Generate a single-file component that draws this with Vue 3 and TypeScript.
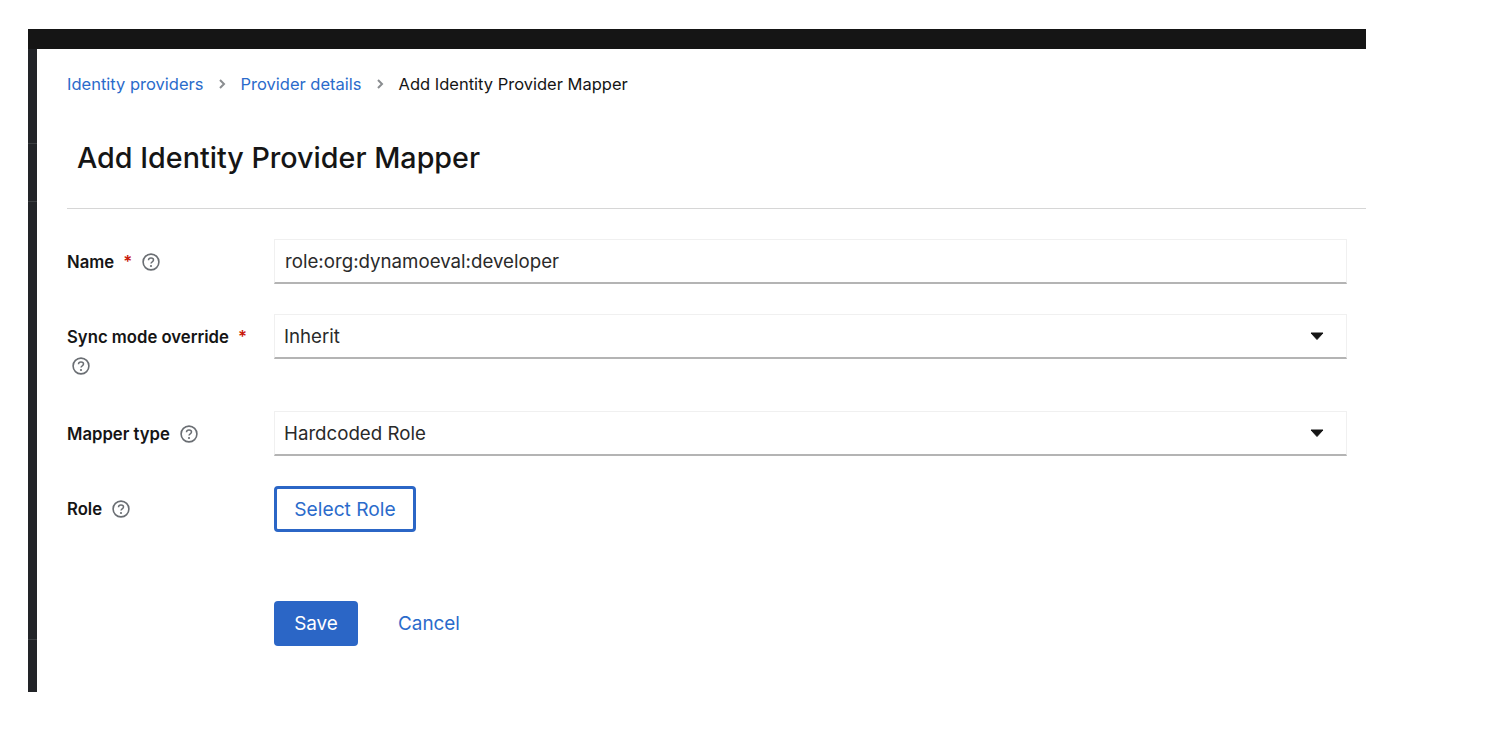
<script setup lang="ts">
interface Row { label: string; required: boolean; kind: 'input' | 'select' | 'button'; value: string; wrap?: boolean }
const rows: Row[] = [
  { label: 'Name', required: true, kind: 'input', value: 'role:org:dynamoeval:developer' },
  { label: 'Sync mode override', required: true, kind: 'select', value: 'Inherit', wrap: true },
  { label: 'Mapper type', required: false, kind: 'select', value: 'Hardcoded Role' },
  { label: 'Role', required: false, kind: 'button', value: 'Select Role' },
]
</script>

<template>
  <div class="page">
    <div class="frame">
      <header class="topbar"></header>
      <div class="body">
        <aside class="rail">
          <div class="seg s1"></div>
          <div class="seg s2"></div>
          <div class="seg s3"></div>
          <div class="seg s4"></div>
        </aside>
        <main class="main">
          <nav class="crumbs">
            <a class="link">Identity providers</a>
            <svg class="chev" viewBox="0 0 10 12"><path d="M3 2l4 4-4 4" fill="none" stroke="#8a8d90" stroke-width="2" /></svg>
            <a class="link">Provider details</a>
            <svg class="chev" viewBox="0 0 10 12"><path d="M3 2l4 4-4 4" fill="none" stroke="#8a8d90" stroke-width="2" /></svg>
            <span class="current">Add Identity Provider Mapper</span>
          </nav>
          <h1 class="title">Add Identity Provider Mapper</h1>
          <div class="rule"></div>
          <form class="form">
            <div v-for="r in rows" :key="r.label" class="row" :class="{ tall: r.wrap, btnrow: r.kind === 'button' }">
              <div class="label" :class="{ wrap: r.wrap }">
                <span class="name">{{ r.label }}</span>
                <span v-if="r.required" class="req">*</span>
                <svg class="help" viewBox="0 0 18 18">
                  <circle cx="9" cy="9" r="7.9" fill="none" stroke="#6a6e73" stroke-width="1.6" />
                  <path d="M6.5 7.2c0-1.4 1.1-2.2 2.5-2.2s2.5.8 2.5 2.1c0 1.8-2.5 1.7-2.5 3.5" fill="none" stroke="#6a6e73" stroke-width="1.5" />
                  <circle cx="9" cy="13" r="1.1" fill="#6a6e73" />
                </svg>
              </div>
              <div v-if="r.kind === 'input'" class="field">{{ r.value }}</div>
              <div v-else-if="r.kind === 'select'" class="field select">
                <span>{{ r.value }}</span>
                <svg class="caret" viewBox="0 0 14 8"><path d="M1 1h12L7 7.5z" fill="#151515" stroke="#151515" stroke-linejoin="round" /></svg>
              </div>
              <button v-else type="button" class="btn-outline">{{ r.value }}</button>
            </div>
            <div class="actions">
              <button type="button" class="btn-save">Save</button>
              <button type="button" class="btn-link">Cancel</button>
            </div>
          </form>
        </main>
      </div>
    </div>
  </div>
</template>

<style>
html, body { margin: 0; background: #fff; }
</style>

<style scoped>
.page {
  width: 1496px;
  height: 734px;
  padding: 29px 130px 42px 28px;
  box-sizing: border-box;
  font-family: Inter, "Noto Sans", sans-serif;
  color: #151515;
  overflow: hidden;
}
.frame { height: 100%; display: flex; flex-direction: column; }
.topbar { height: 19.5px; flex: none; background: #151515; }
.body { flex: 1; display: flex; min-height: 0; }
.rail { width: 8.5px; flex: none; background: #222428; display: flex; flex-direction: column; }
.seg { border-bottom: 1px solid #3c3f42; }
.s1 { height: 94px; }
.s2 { height: 57px; }
.s3 { height: 437px; }
.s4 { flex: 1; border-bottom: none; }
.main { flex: 1; min-width: 0; padding-left: 30.5px; background: #fff; }
.crumbs {
  display: flex;
  align-items: center;
  height: 20px;
  margin-top: 25.5px;
  font-size: 16.5px;
}
.link { color: #2b6bcb; }
.current { color: #151515; }
.chev { width: 10px; height: 12px; margin: 0 13.5px; }
.title {
  margin: 44px 0 0 10px;
  height: 40px;
  font-size: 28.7px;
  line-height: 40px;
  font-weight: 500;
}
.rule { height: 1px; margin-top: 30px; background: #d6d6d6; }
.form { margin-top: 30px; padding-right: 19px; }
.row { display: flex; height: 45px; margin-bottom: 30px; }
.row.tall { height: 67px; }
.row.btnrow { height: 46px; margin-bottom: 69px; }
.label {
  width: 207px;
  flex: none;
  display: flex;
  flex-wrap: wrap;
  align-items: center;
  align-content: flex-start;
  font-size: 16.7px;
  line-height: 20px;
  padding-top: 13px;
  box-sizing: border-box;
}
.label.wrap { padding-right: 10px; row-gap: 10px; }
.name { font-weight: 600; }
.req { color: #c9190b; margin-left: 9px; font-weight: 600; }
.help { width: 18px; height: 18px; margin-left: 10px; }
.label.wrap .help { margin-left: 5px; }
.btnrow .label { padding-top: 13px; }
.field {
  flex: 1;
  height: 45px;
  box-sizing: border-box;
  border: 1px solid #f0f0f0;
  border-bottom: 2px solid #b4b4b4;
  padding: 0 10px;
  display: flex;
  align-items: center;
  font-size: 18.7px;
  color: #2a2a2a;
}
.select { justify-content: space-between; padding-left: 9px; padding-right: 22px; }
.caret { width: 14px; height: 8px; }
.btn-outline {
  width: 142px;
  height: 46px;
  box-sizing: border-box;
  background: #fff;
  border: 3px solid #2b66c6;
  border-radius: 4px;
  color: #2b6bcb;
  font: inherit;
  font-size: 19.2px;
  padding: 0;
}
.actions { display: flex; align-items: center; padding-left: 207px; }
.btn-save {
  width: 84px;
  height: 45px;
  background: #2b66c6;
  color: #fff;
  border: none;
  border-radius: 4px;
  font: inherit;
  font-size: 18.9px;
  padding: 0;
}
.btn-link {
  margin-left: 40px;
  background: none;
  border: none;
  color: #2b6bcb;
  font: inherit;
  font-size: 18.9px;
  padding: 0;
}
</style>
